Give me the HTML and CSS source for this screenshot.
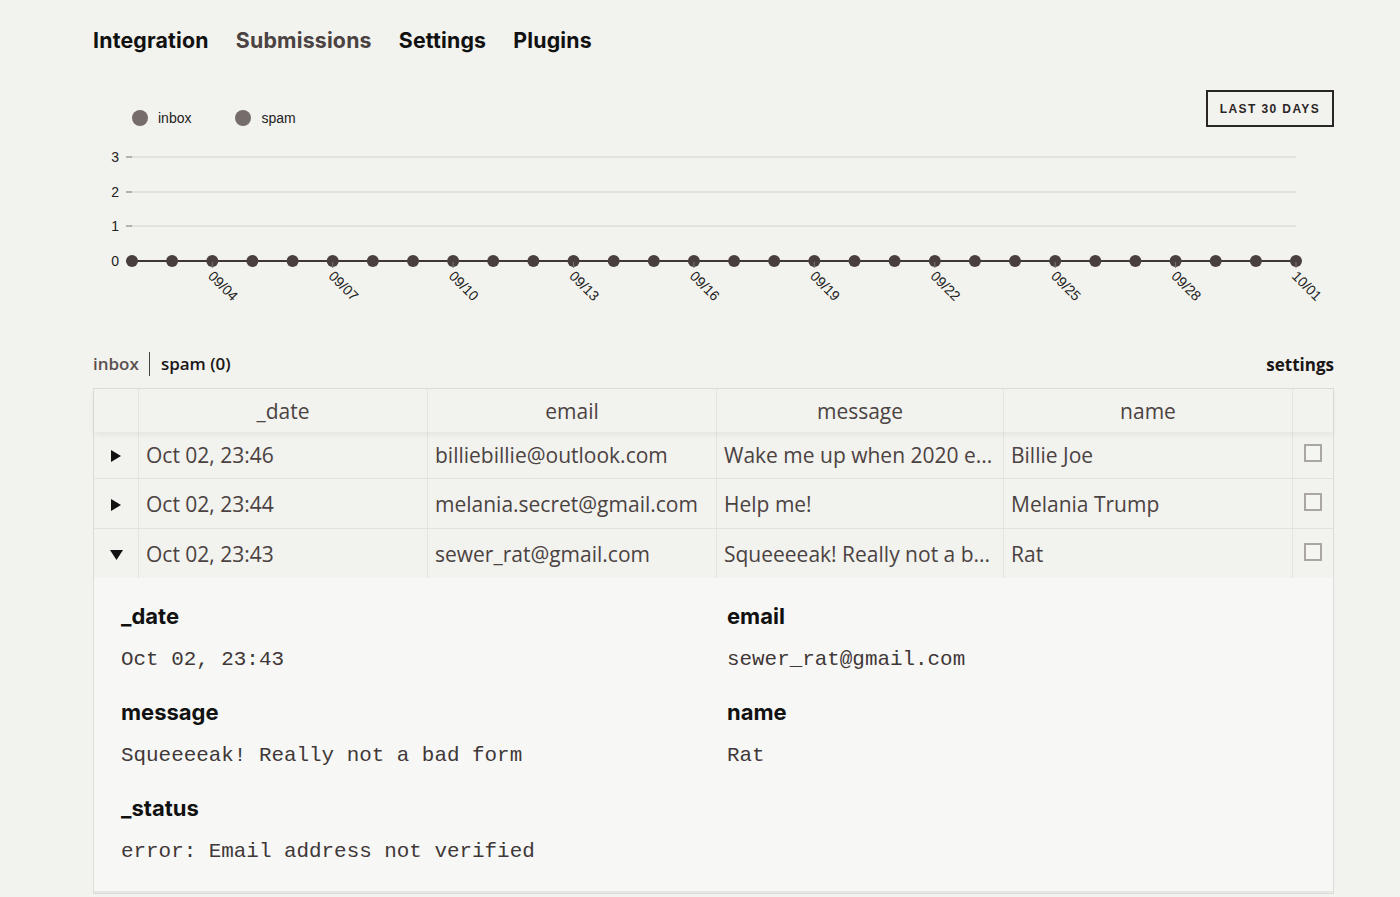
FILE: index.html
```html
<!DOCTYPE html>
<html>
<head>
<meta charset="utf-8">
<link rel="stylesheet" href="styles.css">
</head>
<body>
<div class="page">
  <nav class="nav">
    <a class="nav-item">Integration</a>
    <a class="nav-item active">Submissions</a>
    <a class="nav-item">Settings</a>
    <a class="nav-item">Plugins</a>
  </nav>

  <section class="chart">
    <div class="chart-head">
      <div class="legend">
        <span class="legend-item"><span class="dot"></span>inbox</span>
        <span class="legend-item"><span class="dot"></span>spam</span>
      </div>
      <button class="range-btn">LAST 30 DAYS</button>
    </div>
    <svg class="chart-svg" width="1241" height="200" viewBox="0 0 1241 200">
      <g class="grid">
        <line x1="37" y1="31" x2="1203" y2="31"/>
        <line x1="37" y1="66" x2="1203" y2="66"/>
        <line x1="37" y1="100" x2="1203" y2="100"/>
      </g>
      <g class="ticks">
        <line x1="33" y1="31" x2="39" y2="31"/>
        <line x1="33" y1="66" x2="39" y2="66"/>
        <line x1="33" y1="100" x2="39" y2="100"/>
      </g>
      <g class="ylabels">
        <text x="26" y="36">3</text>
        <text x="26" y="71">2</text>
        <text x="26" y="105">1</text>
        <text x="26" y="140">0</text>
      </g>
      <line class="series" x1="33" y1="135" x2="1203" y2="135"/>
      <g class="points" id="points"></g>
      <g class="xlabels" id="xlabels"></g>
    </svg>
  </section>

  <section class="subs">
    <div class="subs-head">
      <div class="tabs">
        <span class="tab">inbox</span>
        <span class="tab current">spam (0)</span>
      </div>
      <span class="subs-settings">settings</span>
    </div>

    <div class="table">
      <div class="row head">
        <div class="cell"></div>
        <div class="cell">_date</div>
        <div class="cell">email</div>
        <div class="cell">message</div>
        <div class="cell">name</div>
        <div class="cell"></div>
      </div>

      <div class="row first">
        <div class="cell toggle"><svg width="10" height="12" viewBox="0 0 10 12"><path d="M0 0 L10 6 L0 12 Z"/></svg></div>
        <div class="cell">Oct 02, 23:46</div>
        <div class="cell">billiebillie@outlook.com</div>
        <div class="cell">Wake me up when 2020 e...</div>
        <div class="cell">Billie Joe</div>
        <div class="cell check"><span class="box"></span></div>
      </div>

      <div class="row">
        <div class="cell toggle"><svg width="10" height="12" viewBox="0 0 10 12"><path d="M0 0 L10 6 L0 12 Z"/></svg></div>
        <div class="cell">Oct 02, 23:44</div>
        <div class="cell">melania.secret@gmail.com</div>
        <div class="cell">Help me!</div>
        <div class="cell">Melania Trump</div>
        <div class="cell check"><span class="box"></span></div>
      </div>

      <div class="row open">
        <div class="cell toggle"><svg width="13" height="10" viewBox="0 0 13 10"><path d="M0 0 L13 0 L6.5 10 Z"/></svg></div>
        <div class="cell">Oct 02, 23:43</div>
        <div class="cell">sewer_rat@gmail.com</div>
        <div class="cell">Squeeeeak! Really not a b...</div>
        <div class="cell">Rat</div>
        <div class="cell check"><span class="box"></span></div>
      </div>

      <div class="detail">
        <div class="field">
          <div class="field-label">_date</div>
          <div class="field-value">Oct 02, 23:43</div>
        </div>
        <div class="field">
          <div class="field-label">email</div>
          <div class="field-value">sewer_rat@gmail.com</div>
        </div>
        <div class="field">
          <div class="field-label">message</div>
          <div class="field-value">Squeeeeak! Really not a bad form</div>
        </div>
        <div class="field">
          <div class="field-label">name</div>
          <div class="field-value">Rat</div>
        </div>
        <div class="field">
          <div class="field-label">_status</div>
          <div class="field-value">error: Email address not verified</div>
        </div>
      </div>
    </div>
  </section>
</div>
<script src="app.js"></script>
</body>
</html>
```

FILE: styles.css
```css
* { box-sizing: border-box; }
html, body { margin: 0; padding: 0; background: #f2f2ee; }
body { font-family: "Open Sans", sans-serif; color: #4b4242; overflow: hidden; }

.page { width: 1241px; margin-left: 93px; }

.nav { display: flex; gap: 27px; padding-top: 25px; height: 56px; }
.nav-item { font-family: Inter, sans-serif; font-weight: 650; font-size: 21.3px; line-height: 30px; color: #111; letter-spacing: 0.2px; }
.nav-item.active { color: #4b4242; }

.chart { margin-top: 34px; }
.chart-head { display: flex; justify-content: space-between; align-items: flex-start; height: 36px; }
.legend { display: flex; gap: 44px; padding-left: 39px; padding-top: 19px; font-family: "Liberation Sans", Arial, sans-serif; font-size: 14px; color: #222; }
.legend-item { display: flex; align-items: center; gap: 10px; line-height: 18px; }
.dot { width: 16px; height: 16px; border-radius: 50%; background: #756d6b; display: inline-block; }
.range-btn { width: 128px; height: 37px; border: 2px solid #2b2626; background: transparent; font-family: "Liberation Sans", Arial, sans-serif; font-weight: bold; font-size: 12px; letter-spacing: 1.4px; color: #2b2626; padding: 0; }

.chart-svg { display: block; }
.grid line { stroke: #e2e2de; stroke-width: 2; }
.ticks line { stroke: #777; stroke-width: 1; }
.ylabels text { font-family: "Liberation Sans", Arial, sans-serif; font-size: 14px; fill: #222; text-anchor: end; }
.series { stroke: #3f3636; stroke-width: 2; }
.points circle { fill: #4a3f3f; }
.xlabels text { font-family: "Liberation Sans", Arial, sans-serif; font-size: 14px; fill: #222; }
.xticks line { stroke: #777; stroke-width: 1; }

.subs { margin-top: 26px; }
.subs-head { display: flex; justify-content: space-between; align-items: center; height: 24px; margin-bottom: 12px; font-size: 17px; }
.tabs { display: flex; align-items: center; }
.tab { line-height: 24px; color: #5a5050; font-weight: 600; padding-right: 10px; }
.tab.current { color: #1a1616; border-left: 1px solid #4b4242; padding-left: 11px; }
.subs-settings { font-weight: 700; color: #1a1616; }

.table { border: 1px solid #dcdcd8; }
.row { display: grid; grid-template-columns: 45px 289px 289px 287px 289px 1fr; border-bottom: 1px solid #e2e2de; height: 50px; }
.row.head { height: 43px; border-bottom: none; box-shadow: 0 3px 6px rgba(0,0,0,0.06); position: relative; z-index: 1; }
.row.first { height: 47px; }
.row.open { border-bottom: none; height: 49px; }
.cell { display: flex; align-items: center; padding-left: 7px; font-size: 21px; white-space: nowrap; overflow: hidden; border-right: 1px solid #e4e4e0; color: #4b4242; }
.cell:last-child { border-right: none; }
.row.head .cell { justify-content: center; padding-left: 0; }
.cell.toggle { justify-content: center; padding-left: 0; padding-top: 2px; }
.cell.toggle path { fill: #111; }
.cell.check { justify-content: center; padding-left: 0; padding-right: 0; }
.box { width: 18px; height: 18px; border: 2px solid #aaa6a3; background: #f5f5f2; margin-bottom: 4px; }

.detail { background: #f7f7f5; display: grid; grid-template-columns: 606px 1fr; row-gap: 24px; padding: 24px 0 25px 27px; border-bottom: 2px solid #e6e6e2; }
.field-label { font-family: Inter, sans-serif; font-weight: 650; font-size: 22px; line-height: 28px; color: #111; }
.field-value { font-family: "Liberation Mono", "Courier New", monospace; font-size: 20.9px; line-height: 28px; margin-top: 16px; color: #3f3838; }
```

FILE: app.js
```js
(function () {
  var ns = "http://www.w3.org/2000/svg";
  var pts = document.getElementById("points");
  var lbls = document.getElementById("xlabels");
  var x0 = 39, x1 = 1203, n = 30, step = (x1 - x0) / (n - 1);
  var labels = ["09/04","09/07","09/10","09/13","09/16","09/19","09/22","09/25","09/28","10/01"];
  var ticks = document.createElementNS(ns, "g");
  ticks.setAttribute("class", "xticks");
  lbls.parentNode.insertBefore(ticks, lbls);
  for (var i = 0; i < n; i++) {
    var x = x0 + i * step;
    var c = document.createElementNS(ns, "circle");
    c.setAttribute("cx", x.toFixed(1));
    c.setAttribute("cy", "135");
    c.setAttribute("r", "6");
    pts.appendChild(c);
    if (i >= 2 && (i - 2) % 3 === 0) {
      var t = document.createElementNS(ns, "line");
      t.setAttribute("x1", x.toFixed(1)); t.setAttribute("x2", x.toFixed(1));
      t.setAttribute("y1", "136"); t.setAttribute("y2", "142");
      ticks.appendChild(t);
      var tx = document.createElementNS(ns, "text");
      var lx = x - 5, ly = 151;
      tx.setAttribute("x", lx.toFixed(1));
      tx.setAttribute("y", ly);
      tx.setAttribute("transform", "rotate(45 " + lx.toFixed(1) + " " + ly + ")");
      tx.textContent = labels[(i - 2) / 3];
      lbls.appendChild(tx);
    }
  }
})();
```
